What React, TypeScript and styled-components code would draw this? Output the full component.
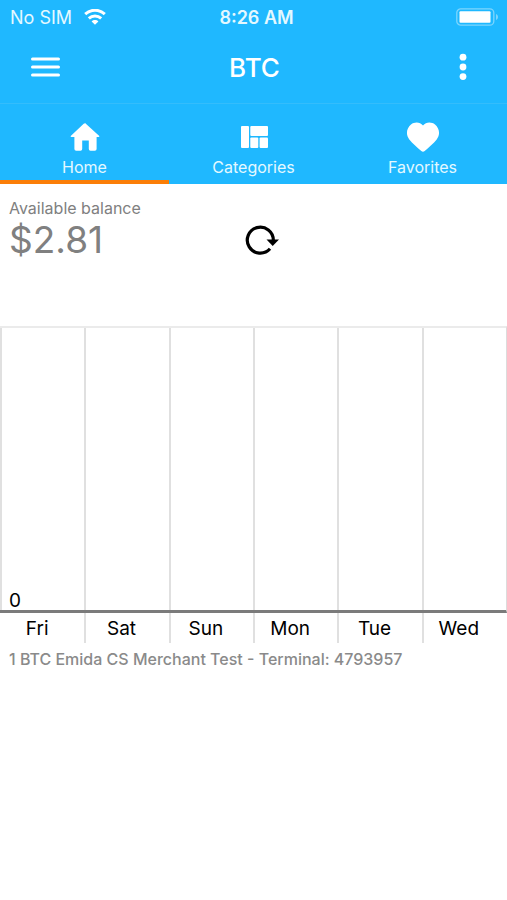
import React from "react";
import styled, { createGlobalStyle } from "styled-components";

const GlobalStyle = createGlobalStyle`
  * { box-sizing: border-box; }
  body {
    margin: 0;
    background: #fff;
    font-family: Inter, "Liberation Sans", sans-serif;
  }
  button { font: inherit; color: inherit; background: none; border: 0; padding: 0; cursor: pointer; }
  svg { display: block; }
`;

const Header = styled.header`
  background: #1fb8ff;
  color: #fff;
`;

const StatusBar = styled.div`
  display: grid;
  grid-template-columns: 1fr auto 1fr;
  align-items: center;
  height: 34px;
  padding: 0 8px 0 10px;
  font-size: 18px;
`;

const Carrier = styled.div`
  display: flex;
  align-items: center;
  gap: 12px;
  color: #e4f8ff;
`;

const Clock = styled.time`
  padding-left: 4px;
  font-weight: 600;
  color: #e4f8ff;
`;

const BatteryArea = styled.div`
  display: flex;
  justify-content: flex-end;
`;

const Toolbar = styled.div`
  display: grid;
  grid-template-columns: 1fr auto 1fr;
  align-items: center;
  height: 70px;
  padding: 0 31px 4px 31px;
  border-bottom: 1px solid #34bdfc;
`;

const Title = styled.h1`
  margin: 0;
  padding: 2px 0 0 2px;
  font-size: 26px;
  line-height: 32px;
  font-weight: 500;
`;

const IconButton = styled.button<{ $end?: boolean }>`
  justify-self: ${(p) => (p.$end ? "end" : "start")};
`;

const Tabs = styled.nav`
  display: grid;
  grid-template-columns: repeat(3, 1fr);
`;

const Tab = styled.button<{ $active?: boolean }>`
  display: flex;
  flex-direction: column;
  align-items: center;
  height: 80px;
  padding-top: 17px;
  gap: 5px;
  border-bottom: 4px solid ${(p) => (p.$active ? "#fb7e07" : "transparent")};
  font-size: 16px;
  line-height: 20px;
  color: #e4f8ff;
`;

const Balance = styled.section`
  display: grid;
  grid-template-columns: 1fr 1fr;
  padding: 14px 9px 0;
  height: 142px;
  align-content: start;
  color: #808080;
`;

const BalanceLabel = styled.div`
  grid-column: 1 / -1;
  font-size: 16px;
  line-height: 20px;
`;

const Amount = styled.div`
  font-size: 37px;
  line-height: 44px;
`;

const RefreshButton = styled.button`
  justify-self: start;
  align-self: center;
  margin-left: -9px;
`;

const Chart = styled.section`
  color: #000;
  font-size: 19px;
  line-height: 24px;
`;

const Plot = styled.div`
  display: grid;
  grid-template-columns: repeat(6, 1fr);
  height: 287px;
  border-top: 2px solid #ebebeb;
  border-right: 1px solid #dcdcdc;
  border-bottom: 3px solid #7b7b7b;
`;

const PlotColumn = styled.div`
  display: flex;
  align-items: flex-end;
  padding-left: 7px;
  border-left: 2px solid #e0e0e0;
  line-height: 18px;
`;

const Axis = styled.div`
  display: grid;
  grid-template-columns: repeat(6, 1fr);
  border-right: 1px solid transparent;
`;

const Day = styled.div`
  height: 30px;
  padding: 4px 12px 0 0;
  text-align: center;
  border-left: 2px solid #e0e0e0;

  &:first-child { border-color: transparent; }
`;

const Terminal = styled.p`
  margin: 0;
  padding: 6px 9px;
  font-size: 16px;
  font-weight: 500;
  line-height: 20px;
  color: #8a8a8a;
`;

const days = ["Fri", "Sat", "Sun", "Mon", "Tue", "Wed"];

const WifiIcon = () => (
  <svg width="22" height="17" viewBox="0 0 22 17" fill="none" stroke="#fff" strokeWidth="3">
    <path d="M1.200 5.200C6.800-.1 15.200-.1 20.800 5.200" />
    <path d="M4.800 9.400c3.600-3.200 8.800-3.200 12.400 0" />
    <path d="M11 15.700 7.600 12.400c1.900-1.800 4.900-1.800 6.800 0z" fill="#fff" stroke="none" />
  </svg>
);

const BatteryIcon = () => (
  <svg width="43" height="18" viewBox="0 0 43 18">
    <rect x=".8" y=".8" width="37" height="16.400" rx="4" fill="none" stroke="#7dd5fd" strokeWidth="1.300" />
    <rect x="3.500" y="3.300" width="31" height="11.400" rx="1" fill="#fff" />
    <path d="M40 6v6c2.700-1 2.700-5 0-6z" fill="#7dd5fd" />
  </svg>
);

const MenuIcon = () => (
  <svg width="29" height="22" viewBox="0 0 29 22" stroke="#fff" strokeWidth="3" strokeLinecap="round">
    <path d="M1.500 3h26M1.500 11h26M1.500 19h26" />
  </svg>
);

const MoreIcon = () => (
  <svg width="26" height="28" viewBox="0 0 26 28" fill="#fff">
    <circle cx="13" cy="4.200" r="3.400" />
    <circle cx="13" cy="14" r="3.400" />
    <circle cx="13" cy="23.600" r="3.400" />
  </svg>
);

const HomeIcon = () => (
  <svg width="32" height="31" viewBox="0 0 32 31" fill="#fff">
    <path d="M16 2 30.300 15q.4 1-.8 1.100H27.600V28q0 1.800-1.800 1.800H21.500q-1.700 0-1.700-1.700V19.500h-6.600v8.600q0 1.700-1.700 1.700H7.200q-1.800 0-1.800-1.800V16.100H2.500q-1.200-.1-.8-1.100L14.700 2.700Q16 1.600 17.300 2.700z" />
  </svg>
);

const CategoriesIcon = () => (
  <svg width="28" height="31" viewBox="0 0 28 31" fill="#fff">
    <rect x="1" y="5" width="8" height="22" rx="1" />
    <rect x="10.300" y="5" width="17.700" height="10" rx="1" />
    <rect x="10.300" y="16.500" width="8" height="10.500" rx="1" />
    <rect x="19.600" y="16.500" width="8.400" height="10.500" rx="1" />
  </svg>
);

const HeartIcon = () => (
  <svg width="34" height="31" viewBox="0 0 34 31" fill="#fff">
    <path d="M17 4.500C20 .8 25.500.7 29 3.500c4.800 4 5.300 10.500 1.700 15-3.200 4-7.700 7.800-12 11.600q-1.700 1.400-3.400 0C11 26.300 6.500 22.500 3.300 18.500-.3 14 .2 7.500 5 3.500 8.500.7 14 .8 17 4.500z" />
  </svg>
);

const RefreshIcon = () => (
  <svg width="36" height="32" viewBox="0 0 36 32">
    <path d="M25 24.800A13 13 0 1 1 28.300 16.500" fill="none" stroke="#000" strokeWidth="3.200" />
    <path d="M21.500 15.500h12.500l-6.300 6.500z" />
  </svg>
);

const tabs = [
  { label: "Home", Icon: HomeIcon },
  { label: "Categories", Icon: CategoriesIcon },
  { label: "Favorites", Icon: HeartIcon },
];

export default function App() {
  return (
    <>
      <GlobalStyle />
      <Header>
        <StatusBar>
          <Carrier>
            No SIM
            <WifiIcon />
          </Carrier>
          <Clock>8:26 AM</Clock>
          <BatteryArea>
            <BatteryIcon />
          </BatteryArea>
        </StatusBar>
        <Toolbar>
          <IconButton aria-label="Menu">
            <MenuIcon />
          </IconButton>
          <Title>BTC</Title>
          <IconButton $end aria-label="More options">
            <MoreIcon />
          </IconButton>
        </Toolbar>
        <Tabs>
          {tabs.map(({ label, Icon }, i) => (
            <Tab key={label} $active={i === 0} aria-current={i === 0 ? "page" : undefined}>
              <Icon />
              {label}
            </Tab>
          ))}
        </Tabs>
      </Header>
      <main>
        <Balance>
          <BalanceLabel>Available balance</BalanceLabel>
          <Amount>$2.81</Amount>
          <RefreshButton aria-label="Refresh balance">
            <RefreshIcon />
          </RefreshButton>
        </Balance>
        <Chart aria-label="Weekly activity">
          <Plot>
            {days.map((day, i) => (
              <PlotColumn key={day}>{i === 0 && "0"}</PlotColumn>
            ))}
          </Plot>
          <Axis>
            {days.map((day) => (
              <Day key={day}>{day}</Day>
            ))}
          </Axis>
        </Chart>
        <Terminal>1 BTC Emida CS Merchant Test - Terminal: 4793957</Terminal>
      </main>
    </>
  );
}
